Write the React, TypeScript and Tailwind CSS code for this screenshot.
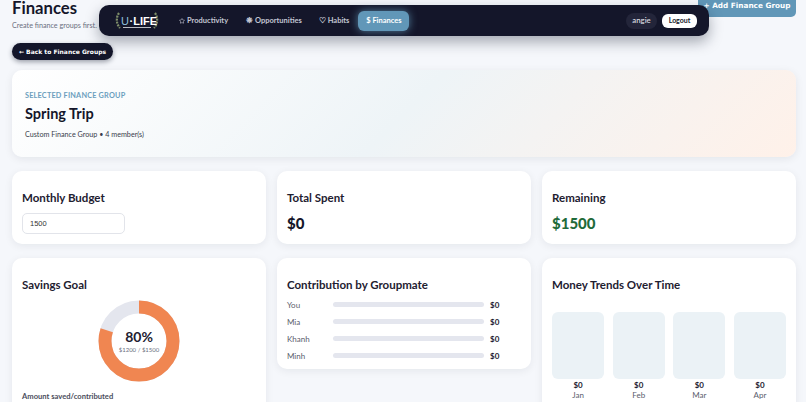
import { Star } from "lucide-react";

const members = ["You", "Mia", "Khanh", "Minh"];
const months = ["Jan", "Feb", "Mar", "Apr"];

function Logo() {
  return (
    <svg width="46" height="20" viewBox="0 0 46 20" fill="none" className="shrink-0">
      <path d="M5 2C2 6 2 13 6 17" stroke="#7f8f6a" strokeWidth="2.2" strokeDasharray="2 1" />
      <path d="M41 2C44 6 44 13 40 17" stroke="#7f8f6a" strokeWidth="2.2" strokeDasharray="2 1" />
      <path d="M9 16.5H37" stroke="#e5e7eb" strokeWidth="0.8" />
      <text x="7" y="13.5" fontSize="11" fontFamily="'Liberation Sans', sans-serif" fill="#8fc0dc">U</text>
      <text x="15.5" y="13.5" fontSize="11" fontWeight="700" fontFamily="'Liberation Sans', sans-serif" fill="#ffffff">·LIFE</text>
    </svg>
  );
}

function NavBar() {
  return (
    <nav className="absolute left-[99px] top-[5px] flex h-[31px] w-[610px] items-center rounded-[10px] bg-[#14162a] pl-[15px] pr-[12px] shadow-[0_6px_14px_rgba(15,23,42,0.35)]">
      <Logo />
      <div className="ml-[19px] flex items-center text-[7.5px] font-bold text-[#c3c6d2]">
        <span className="flex items-center gap-[2px]">
          <Star className="h-[6px] w-[6px]" strokeWidth={2.5} />
          Productivity
        </span>
        <span className="ml-[18px]">❋ Opportunities</span>
        <span className="ml-[17px]">♡ Habits</span>
        <span className="ml-[9px] flex h-[20px] w-[51px] items-center justify-center rounded-[6px] bg-[#6197b8] font-bold text-white shadow-[0_0_8px_rgba(97,151,184,0.8)]">
          $ Finances
        </span>
      </div>
      <div className="ml-auto flex items-center gap-[5px]">
        <span className="flex h-[16px] w-[31px] items-center justify-center rounded-full bg-[#23253a] text-[7.8px] font-semibold text-[#d5d7df]">
          angie
        </span>
        <button className="flex h-[14px] w-[35px] items-center justify-center rounded-[6px] bg-white text-[7px] font-bold text-[#14162a]">
          Logout
        </button>
      </div>
    </nav>
  );
}

function Card({ title, className, children }: { title: string; className?: string; children?: React.ReactNode }) {
  return (
    <div className={`rounded-[10px] bg-white px-[10px] pt-[18px] shadow-[0_2px_8px_rgba(15,23,42,0.07)] ${className ?? ""}`}>
      <h3 className="text-[11.5px] leading-[17px] font-bold text-[#1e2030]">{title}</h3>
      {children}
    </div>
  );
}

export default function App() {
  return (
    <div className="relative h-[402px] w-[806px] overflow-hidden bg-[#f5f7fb] font-['Lato',sans-serif]">
      <NavBar />
      <div className="pl-[12px] pr-[10px]">
        <div className="flex h-[17px] items-start justify-between">
          <h1 className="-mt-[9px] text-[16.7px] leading-[34px] font-bold text-[#14162a]">Finances</h1>
          <button className="-mt-[8px] flex h-[25px] w-[98px] items-center justify-center whitespace-nowrap rounded-b-[5px] bg-[#6197b8] pt-[3px] font-['DejaVu_Sans',sans-serif] text-[7.3px] font-bold text-white">
            + Add Finance Group
          </button>
        </div>
        <p className="mt-[3px] text-[7.2px] leading-[11px] text-[#6b7080]">Create finance groups first.</p>
        <button className="mt-[12px] flex h-[17px] w-[101px] items-center justify-center whitespace-nowrap rounded-full bg-[#14162a] font-['DejaVu_Sans',sans-serif] text-[6px] font-bold text-white shadow-[0_2px_5px_rgba(15,23,42,0.4)]">
          ← Back to Finance Groups
        </button>

        <section className="mt-[10px] h-[87px] rounded-[10px] bg-[linear-gradient(135deg,#ffffff_0%,#eef4f7_50%,#fff1e9_100%)] px-[13px] pt-[20px] shadow-[0_2px_8px_rgba(15,23,42,0.08)]">
          <div className="text-[7.3px] leading-[11px] font-bold tracking-[0.2px] text-[#6b9ebd]">SELECTED FINANCE GROUP</div>
          <h2 className="mt-[2px] text-[14.5px] leading-[21px] font-bold text-[#14162a]">Spring Trip</h2>
          <p className="mt-[5px] text-[7.2px] leading-[11px] text-[#3a3d4c]">Custom Finance Group • 4 member(s)</p>
        </section>

        <div className="mt-[14px] grid grid-cols-3 gap-[11px]">
          <Card title="Monthly Budget" className="h-[73px]">
            <input
              readOnly
              value="1500"
              className="mt-[7px] h-[21px] w-[103px] rounded-[5px] border border-[#e2e4ea] bg-white pl-[7px] font-['Liberation_Sans',sans-serif] text-[7.5px] text-[#333]"
            />
          </Card>
          <Card title="Total Spent" className="h-[73px]">
            <div className="mt-[6px] text-[15px] leading-[22px] font-black text-[#14162a]">$0</div>
          </Card>
          <Card title="Remaining" className="h-[73px]">
            <div className="mt-[6px] text-[15px] leading-[22px] font-black text-[#1f6b3a]">$1500</div>
          </Card>
        </div>

        <div className="mt-[14px] grid grid-cols-3 items-start gap-[11px]">
          <Card title="Savings Goal" className="h-[200px]">
            <div className="relative mx-auto mt-[7px] h-[82px] w-[82px]">
              <svg viewBox="0 0 82 82" className="h-full w-full -rotate-90">
                <circle cx="41" cy="41" r="34" fill="none" stroke="#e4e6ee" strokeWidth="13" />
                <circle cx="41" cy="41" r="34" fill="none" stroke="#f08651" strokeWidth="13" strokeDasharray="170.9 213.6" />
              </svg>
              <div className="absolute inset-0 flex flex-col items-center justify-center">
                <span className="text-[14px] leading-[16px] font-bold text-[#1e2030]">80%</span>
                <span className="text-[6px] leading-[9px] text-[#6b7080]">$1200 / $1500</span>
              </div>
            </div>
            <p className="mt-[9px] text-[7.6px] leading-[10px] font-bold text-[#4a4d5c]">Amount saved/contributed</p>
          </Card>
          <Card title="Contribution by Groupmate" className="h-[111px]">
            <div className="mt-[6px] flex flex-col gap-[6px]">
              {members.map((name) => (
                <div key={name} className="flex h-[11px] items-center">
                  <span className="w-[46px] text-[8px] text-[#5a5d6c]">{name}</span>
                  <div className="h-[5px] w-[151px] rounded-full bg-[#e4e6ee]" />
                  <span className="ml-[6px] text-[8px] font-bold text-[#1e2030]">$0</span>
                </div>
              ))}
            </div>
          </Card>
          <Card title="Money Trends Over Time" className="h-[200px]">
            <div className="mt-[19px] grid grid-cols-4 gap-[8.5px]">
              {months.map((m) => (
                <div key={m} className="flex flex-col items-center">
                  <div className="h-[67px] w-full rounded-[6px] bg-[#ebf2f6]" />
                  <span className="mt-[1px] text-[8px] leading-[10px] font-bold text-[#1e2030]">$0</span>
                  <span className="text-[8px] leading-[10px] text-[#5a5d6c]">{m}</span>
                </div>
              ))}
            </div>
          </Card>
        </div>
      </div>
    </div>
  );
}
